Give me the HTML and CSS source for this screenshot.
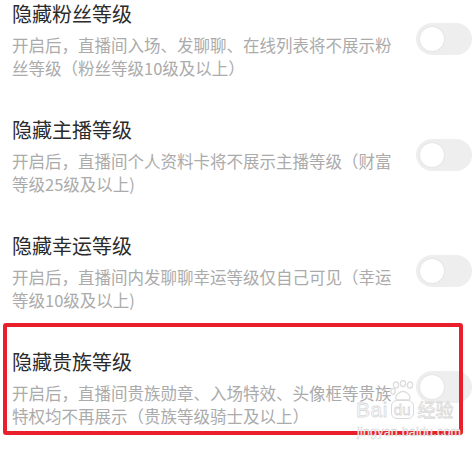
FILE: index.html
```html
<!DOCTYPE html>
<html lang="zh-CN">
<head>
<meta charset="utf-8">
<link rel="stylesheet" href="styles.css">
</head>
<body>
<div class="list">
  <div class="item">
    <div class="text">
      <div class="title">隐藏粉丝等级</div>
      <div class="desc">开启后，直播间入场、发聊聊、在线列表将不展示粉丝等级（粉丝等级10级及以上）</div>
    </div>
    <div class="toggle"><span class="knob"></span></div>
  </div>
  <div class="item">
    <div class="text">
      <div class="title">隐藏主播等级</div>
      <div class="desc">开启后，直播间个人资料卡将不展示主播等级（财富等级25级及以上)</div>
    </div>
    <div class="toggle"><span class="knob"></span></div>
  </div>
  <div class="item">
    <div class="text">
      <div class="title">隐藏幸运等级</div>
      <div class="desc">开启后，直播间内发聊聊幸运等级仅自己可见（幸运等级10级及以上)</div>
    </div>
    <div class="toggle"><span class="knob"></span></div>
  </div>
  <div class="item">
    <div class="text">
      <div class="title">隐藏贵族等级</div>
      <div class="desc">开启后，直播间贵族勋章、入场特效、头像框等贵族特权均不再展示（贵族等级骑士及以上）</div>
    </div>
    <div class="toggle"><span class="knob"></span></div>
  </div>
</div>
<div class="highlight"></div>
<div class="watermark">
  <svg class="paw" width="26" height="22" viewBox="0 0 26 22">
    <g fill="none" stroke="#dcdcdc" stroke-width="1.3">
      <ellipse cx="6" cy="5" rx="2.6" ry="3.2"/>
      <ellipse cx="13" cy="3.6" rx="2.6" ry="3"/>
      <ellipse cx="20" cy="5" rx="2.6" ry="3.2"/>
      <ellipse cx="3" cy="11.5" rx="2.2" ry="2.8"/>
      <path d="M8 20 C5 20 5 15 9 13 C11 11 15 11 17 13 C21 15 21 20 18 20 Z"/>
    </g>
  </svg>
  <div class="wm-logo"><span class="wm-bai">Bai</span><span class="wm-du">du</span><span class="wm-jy">经验</span></div>
  <div class="wm-url">jingyan.baidu.com</div>
</div>
</body>
</html>
```
FILE: styles.css
```css
html, body {
  margin: 0;
  padding: 0;
  background: #ffffff;
}
body {
  width: 473px;
  height: 450px;
  overflow: hidden;
  position: relative;
  font-family: "Noto Sans CJK SC", "Noto Sans", sans-serif;
}
.list {
  display: flex;
  flex-direction: column;
}
.item {
  height: 116px;
  display: flex;
  align-items: flex-start;
  padding-left: 12px;
  box-sizing: border-box;
}
.text {
  width: 392px;
  display: flex;
  flex-direction: column;
  gap: 6px;
}
.title {
  font-size: 20px;
  line-height: 28px;
  color: #2b2b2b;
  white-space: nowrap;
}
.desc {
  font-size: 16.5px;
  line-height: 23px;
  color: #ababab;
}
.toggle {
  margin-left: 12px;
  margin-top: 23px;
  width: 56px;
  height: 32px;
  border-radius: 16px;
  background: #eeeeee;
  position: relative;
  flex: none;
}
.knob {
  position: absolute;
  left: 4px;
  top: 4px;
  width: 24px;
  height: 24px;
  border-radius: 50%;
  background: #ffffff;
  box-shadow: 0 0 2px rgba(0, 0, 0, 0.12);
}
.highlight {
  position: absolute;
  left: 3px;
  top: 323px;
  width: 460px;
  height: 112px;
  box-sizing: border-box;
  border: 4.5px solid #e9202b;
  border-radius: 3px;
  pointer-events: none;
}
.watermark {
  position: absolute;
  left: 354px;
  top: 380px;
  width: 100px;
  height: 60px;
  pointer-events: none;
}
.paw {
  position: absolute;
  left: 36px;
  top: 0;
}
.wm-logo {
  position: absolute;
  left: 2px;
  top: 19px;
  display: flex;
  align-items: center;
  font-family: "Liberation Sans", sans-serif;
  color: transparent;
  -webkit-text-stroke: 0.8px #dadada;
  font-size: 21px;
  line-height: 21px;
}
.wm-bai {
  letter-spacing: 0.5px;
}
.wm-du {
  font-size: 15px;
  line-height: 17px;
  margin-left: 3px;
  padding: 0 2px;
  border: 1px solid #dadada;
  border-radius: 6px;
}
.wm-jy {
  font-family: "Noto Sans CJK SC", sans-serif;
  font-size: 18px;
  margin-left: 4px;
}
.wm-url {
  position: absolute;
  left: 3px;
  top: 46px;
  font-family: "Liberation Sans", sans-serif;
  font-size: 12.5px;
  line-height: 13px;
  color: #f4f4f4;
  -webkit-text-stroke: 0.3px #cccccc;
  letter-spacing: 0.2px;
}
```
